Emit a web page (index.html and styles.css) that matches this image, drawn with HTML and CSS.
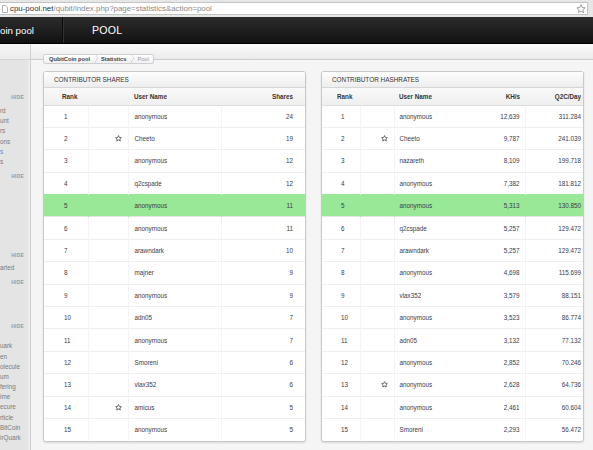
FILE: index.html
```html
<!DOCTYPE html>
<html>
<head>
<meta charset="utf-8">
<link rel="stylesheet" href="styles.css">
</head>
<body>
<div class="chrome">
  <div class="urlbox">
    <svg class="pageicon" width="6" height="8" viewBox="0 0 6 8"><path d="M0.5 0.5h3.2l1.8 1.8v5.2h-5z" fill="#fff" stroke="#9a9a9a" stroke-width="0.8"/></svg>
    <span class="host">cpu-pool.net</span><span class="path">/qubit/index.php?page=statistics&amp;action=pool</span>
    <svg class="bookmark" width="10" height="10" viewBox="0 0 10 10"><path d="M5 0.8l1.2 2.7 2.9.3-2.2 1.9.7 2.9L5 7.1 2.4 8.6l.7-2.9L.9 3.8l2.9-.3z" fill="none" stroke="#8a8a8a" stroke-width="0.8" stroke-linejoin="round"/></svg>
  </div>
</div>
<header class="topbar">
  <div class="brand">oin pool</div>
  <div class="nav">POOL</div>
</header>
<div class="main">
  <aside class="sidebar">
    <div class="sidetop"></div>
    <div class="sec s1">
      <div class="hide">HIDE</div>
      <ul class="items">
        <li>rd</li><li>unt</li><li>rs</li><li>ons</li><li class="active">s</li><li>s</li>
      </ul>
    </div>
    <div class="sec s2"><div class="hide">HIDE</div></div>
    <div class="sec s3">
      <div class="hide">HIDE</div>
      <ul class="items"><li>arted</li></ul>
    </div>
    <div class="sec s4"><div class="hide">HIDE</div></div>
    <div class="sec s5">
      <div class="hide">HIDE</div>
      <ul class="items">
        <li>uark</li><li>en</li><li>olecule</li><li>um</li><li>fering</li><li>ime</li><li>ecure</li><li>rticle</li><li>BitCoin</li><li>irQuark</li>
      </ul>
    </div>
  </aside>
  <div class="content">
    <div class="crumbbar">
      <div class="crumbs">
        <span class="crumb strong">QubitCoin pool</span><span class="sep"></span><span class="crumb strong">Statistics</span><span class="sep"></span><span class="crumb dim">Pool</span>
      </div>
    </div>
    <div class="panels">
      <section class="panel left">
        <div class="ptitle">CONTRIBUTOR SHARES</div>
        <table>
          <colgroup><col class="c-rank"><col class="c-star"><col class="c-name"><col class="c-val"></colgroup>
          <thead><tr><th class="rank">Rank</th><th></th><th class="name">User Name</th><th class="num">Shares</th></tr></thead>
          <tbody>
            <tr><td class="rank">1</td><td class="star"></td><td class="name">anonymous</td><td class="num">24</td></tr>
            <tr><td class="rank">2</td><td class="star"><svg width="7" height="7" viewBox="0 0 10 10"><path d="M5 0.8l1.2 2.7 2.9.3-2.2 1.9.7 2.9L5 7.1 2.4 8.6l.7-2.9L.9 3.8l2.9-.3z" fill="none" stroke="#3a3a3a" stroke-width="1" stroke-linejoin="round"/></svg></td><td class="name">Cheeto</td><td class="num">19</td></tr>
            <tr><td class="rank">3</td><td class="star"></td><td class="name">anonymous</td><td class="num">12</td></tr>
            <tr><td class="rank">4</td><td class="star"></td><td class="name">q2cspade</td><td class="num">12</td></tr>
            <tr class="me"><td class="rank">5</td><td class="star"></td><td class="name">anonymous</td><td class="num">11</td></tr>
            <tr><td class="rank">6</td><td class="star"></td><td class="name">anonymous</td><td class="num">11</td></tr>
            <tr><td class="rank">7</td><td class="star"></td><td class="name">arawndark</td><td class="num">10</td></tr>
            <tr><td class="rank">8</td><td class="star"></td><td class="name">majner</td><td class="num">9</td></tr>
            <tr><td class="rank">9</td><td class="star"></td><td class="name">anonymous</td><td class="num">9</td></tr>
            <tr><td class="rank">10</td><td class="star"></td><td class="name">adn05</td><td class="num">7</td></tr>
            <tr><td class="rank">11</td><td class="star"></td><td class="name">anonymous</td><td class="num">7</td></tr>
            <tr><td class="rank">12</td><td class="star"></td><td class="name">Smoreni</td><td class="num">6</td></tr>
            <tr><td class="rank">13</td><td class="star"></td><td class="name">vlax352</td><td class="num">6</td></tr>
            <tr><td class="rank">14</td><td class="star"><svg width="7" height="7" viewBox="0 0 10 10"><path d="M5 0.8l1.2 2.7 2.9.3-2.2 1.9.7 2.9L5 7.1 2.4 8.6l.7-2.9L.9 3.8l2.9-.3z" fill="none" stroke="#3a3a3a" stroke-width="1" stroke-linejoin="round"/></svg></td><td class="name">amicus</td><td class="num">5</td></tr>
            <tr><td class="rank">15</td><td class="star"></td><td class="name">anonymous</td><td class="num">5</td></tr>
          </tbody>
        </table>
      </section>
      <section class="panel right">
        <div class="ptitle">CONTRIBUTOR HASHRATES</div>
        <table>
          <colgroup><col class="c-rank"><col class="c-star"><col class="c-name"><col class="c-khs"><col class="c-day"></colgroup>
          <thead><tr><th class="rank">Rank</th><th></th><th class="name">User Name</th><th class="num">KH/s</th><th class="num day">Q2C/Day</th></tr></thead>
          <tbody>
            <tr><td class="rank">1</td><td class="star"></td><td class="name">anonymous</td><td class="num khs">12,639</td><td class="num day">311.284</td></tr>
            <tr><td class="rank">2</td><td class="star"><svg width="7" height="7" viewBox="0 0 10 10"><path d="M5 0.8l1.2 2.7 2.9.3-2.2 1.9.7 2.9L5 7.1 2.4 8.6l.7-2.9L.9 3.8l2.9-.3z" fill="none" stroke="#3a3a3a" stroke-width="1" stroke-linejoin="round"/></svg></td><td class="name">Cheeto</td><td class="num khs">9,787</td><td class="num day">241.039</td></tr>
            <tr><td class="rank">3</td><td class="star"></td><td class="name">nazareth</td><td class="num khs">8,109</td><td class="num day">199.718</td></tr>
            <tr><td class="rank">4</td><td class="star"></td><td class="name">anonymous</td><td class="num khs">7,382</td><td class="num day">181.812</td></tr>
            <tr class="me"><td class="rank">5</td><td class="star"></td><td class="name">anonymous</td><td class="num khs">5,313</td><td class="num day">130.850</td></tr>
            <tr><td class="rank">6</td><td class="star"></td><td class="name">q2cspade</td><td class="num khs">5,257</td><td class="num day">129.472</td></tr>
            <tr><td class="rank">7</td><td class="star"></td><td class="name">arawndark</td><td class="num khs">5,257</td><td class="num day">129.472</td></tr>
            <tr><td class="rank">8</td><td class="star"></td><td class="name">anonymous</td><td class="num khs">4,698</td><td class="num day">115.699</td></tr>
            <tr><td class="rank">9</td><td class="star"></td><td class="name">vlax352</td><td class="num khs">3,579</td><td class="num day">88.151</td></tr>
            <tr><td class="rank">10</td><td class="star"></td><td class="name">anonymous</td><td class="num khs">3,523</td><td class="num day">86.774</td></tr>
            <tr><td class="rank">11</td><td class="star"></td><td class="name">adn05</td><td class="num khs">3,132</td><td class="num day">77.132</td></tr>
            <tr><td class="rank">12</td><td class="star"></td><td class="name">anonymous</td><td class="num khs">2,852</td><td class="num day">70.246</td></tr>
            <tr><td class="rank">13</td><td class="star"><svg width="7" height="7" viewBox="0 0 10 10"><path d="M5 0.8l1.2 2.7 2.9.3-2.2 1.9.7 2.9L5 7.1 2.4 8.6l.7-2.9L.9 3.8l2.9-.3z" fill="none" stroke="#3a3a3a" stroke-width="1" stroke-linejoin="round"/></svg></td><td class="name">anonymous</td><td class="num khs">2,628</td><td class="num day">64.736</td></tr>
            <tr><td class="rank">14</td><td class="star"></td><td class="name">anonymous</td><td class="num khs">2,461</td><td class="num day">60.604</td></tr>
            <tr><td class="rank">15</td><td class="star"></td><td class="name">Smoreni</td><td class="num khs">2,293</td><td class="num day">56.472</td></tr>
          </tbody>
        </table>
      </section>
    </div>
  </div>
</div>
</body>
</html>
```
FILE: styles.css
```css
* { box-sizing: border-box; }
html, body { margin: 0; padding: 0; }
body {
  width: 593px;
  height: 450px;
  overflow: hidden;
  font-family: "Liberation Sans", Arial, sans-serif;
  background: #f5f5f5;
  color: #3b3b48;
}
ul { list-style: none; margin: 0; padding: 0; }

/* browser chrome */
.chrome {
  height: 17px;
  background: #e6e6e6;
  padding-top: 2px;
  padding-right: 5px;
}
.urlbox {
  height: 13px;
  background: #fff;
  border: 1px solid #c4c4c4;
  border-left: none;
  display: flex;
  align-items: center;
  font-size: 7.9px;
  line-height: 11px;
  padding-left: 2px;
}
.pageicon { margin-right: 2px; }
.host { color: #333; }
.path { color: #8a8a8a; }
.bookmark { margin-left: auto; margin-right: 1px; }

/* dark header */
.topbar {
  height: 27px;
  display: flex;
  align-items: center;
  background: linear-gradient(#2c2c2c, #1d1d1d 60%, #111);
  border-bottom: 1px solid #000;
  color: #fff;
}
.brand {
  width: 63px;
  height: 100%;
  display: flex;
  align-items: center;
  font-size: 9.7px;
  border-right: 1px solid #0a0a0a;
  box-shadow: 1px 0 0 #333;
}
.nav {
  padding-left: 29px;
  font-size: 10.6px;
  letter-spacing: 0.2px;
}

/* main */
.main {
  display: flex;
  height: 406px;
}
.sidebar {
  width: 31px;
  flex: none;
  background: #e4e4e4;
  border-right: 1px solid #d0d0d0;
  box-shadow: inset -2px 0 0 #ececec;
  color: #7a7a7a;
  font-size: 6.3px;
  overflow: hidden;
}
.sidetop {
  height: 16px;
  background: linear-gradient(#f6f6f6, #ececec);
  border-bottom: 1px solid #d4d4d4;
}
.hide {
  height: 10px;
  line-height: 10px;
  text-align: right;
  padding-right: 6px;
  font-size: 5px;
  font-weight: bold;
  color: #9a9a9a;
  letter-spacing: 0.2px;
}
.items li { height: 10.2px; line-height: 10.2px; white-space: nowrap; }
.items li.active { color: #4a8fd8; }
.s1 { margin-top: 32px; }
.s1 .items { margin-top: 4px; }
.s2 { margin-top: 4px; }
.s3 { margin-top: 69px; }
.s3 .items { margin-top: 3px; }
.s4 { margin-top: 4px; }
.s5 { margin-top: 34px; }
.s5 .items { margin-top: 10px; }

.content { flex: 1; min-width: 0; }
.crumbbar {
  height: 16px;
  background: linear-gradient(#fbfbfb, #ebebeb);
  border-bottom: 1px solid #c9ccd2;
  padding: 3px 0 0 12px;
}
.crumbs {
  display: inline-flex;
  align-items: center;
  height: 10px;
  border: 1px solid #cfcfcf;
  border-radius: 2px;
  background: linear-gradient(#fff, #f0f0f0);
  font-size: 5.7px;
  padding: 0 4px 0 5px;
}
.crumb.strong { font-weight: bold; color: #444; }
.crumb.dim { color: #999; }
.sep {
  width: 5px;
  height: 8px;
  margin: 0 3px 0 3px;
  border-right: 1px solid #d2d2d2;
  border-top: 1px solid #d2d2d2;
  transform: scaleX(0.6) rotate(45deg);
}

.panels {
  display: flex;
  gap: 15px;
  padding: 11px 0 0 12px;
}
.panel {
  background: #fff;
  border: 1px solid #c9c9c9;
  border-radius: 3px;
  box-shadow: 0 1px 2px rgba(0,0,0,0.12);
  overflow: hidden;
}
.panel.left { width: 263px; }
.panel.right { width: 263px; }
.ptitle {
  height: 16px;
  line-height: 15px;
  padding-left: 10px;
  font-size: 6.4px;
  color: #333;
  background: linear-gradient(#fefefe, #ededed);
  border-bottom: 1px solid #d6d6d6;
}
table {
  width: 100%;
  border-collapse: collapse;
  table-layout: fixed;
  font-size: 6.3px;
}
thead th {
  height: 17px;
  font-weight: bold;
  color: #333;
  background: linear-gradient(#f9f9f9, #efefef);
  border-bottom: 1px solid #dcdcdc;
  text-align: left;
  padding: 0;
}
tbody td {
  height: 22.4px;
  padding: 0;
  border-top: 1px solid #efefef;
}
tbody tr:first-child td { border-top: none; }

.left .c-rank { width: 44px; }
.left .c-star { width: 40px; }
.left .c-name { width: 93px; }
.left th.rank { padding-left: 18px; }
.left td.rank { padding-left: 20px; }
.left td.rank, .left td.star, .left td.name { border-right: 1px solid #f3f3f3; }
.left .num { text-align: right; padding-right: 12px; }
.left .name { padding-left: 6px; }

.right .c-rank { width: 38px; }
.right .c-star { width: 34px; }
.right .c-name { width: 80px; }
.right .c-khs { width: 51px; }
.right th.rank { padding-left: 15px; }
.right td.rank { padding-left: 19px; }
.right td.rank, .right td.star, .right td.khs { border-right: 1px solid #f3f3f3; }
.right .name { padding-left: 5px; }
.right .num { text-align: right; padding-right: 5px; }
.right .day { padding-right: 2px; }

.panel tbody tr.me td { background: #98e898; border-top-color: #98e898; border-right-color: #98e898; }
.panel tbody tr.me + tr td { border-top-color: #e6e6e6; }

td.star {
  text-align: right;
  padding-right: 6px;
  line-height: 0;
}
td.star svg { display: inline-block; vertical-align: middle; }
```
